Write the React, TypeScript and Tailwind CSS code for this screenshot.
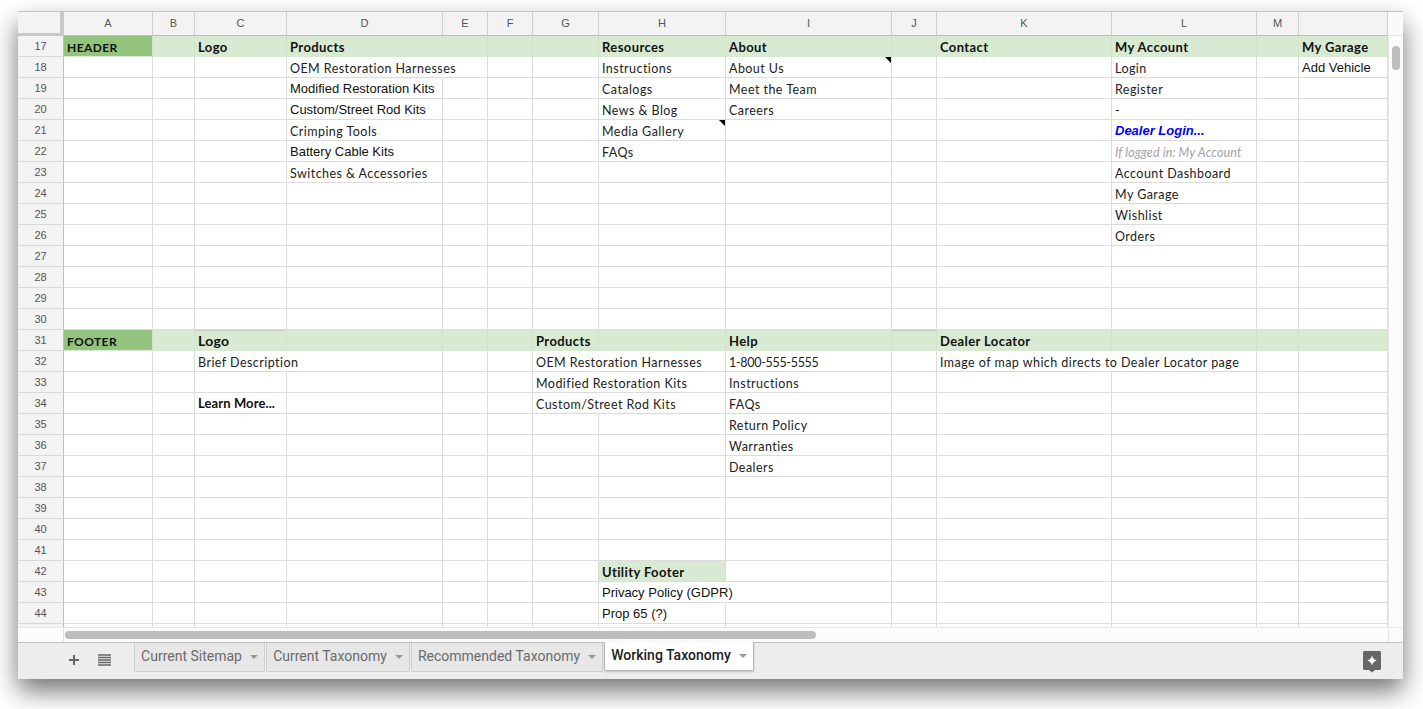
import React from 'react';

type CellStyle = 'karla' | 'phone' | 'bold' | 'caps' | 'learn' | 'arial' | 'dealer' | 'muted' | 'logo';

interface Cell {
  text?: string;
  kind?: CellStyle;
  noRight?: boolean;
  note?: boolean;
  fill?: string;
}

const COLUMNS = [
  { label: 'A', width: 'w-[89px]' },
  { label: 'B', width: 'w-[42px]' },
  { label: 'C', width: 'w-[92px]' },
  { label: 'D', width: 'w-[156px]' },
  { label: 'E', width: 'w-[45px]' },
  { label: 'F', width: 'w-[45px]' },
  { label: 'G', width: 'w-[66px]' },
  { label: 'H', width: 'w-[127px]' },
  { label: 'I', width: 'w-[166px]' },
  { label: 'J', width: 'w-[45px]' },
  { label: 'K', width: 'w-[175px]' },
  { label: 'L', width: 'w-[145px]' },
  { label: 'M', width: 'w-[42px]' },
  { label: '', width: 'w-[89px]' },
];

const KIND_CLASS: Record<CellStyle, string> = {
  karla: "font-['Lato',sans-serif] text-[12.5px] tracking-[0.45px] text-[#222]",
  phone: "font-['Lato',sans-serif] text-[12.5px] tracking-[-0.3px] text-[#222]",
  bold: "font-['Lato',sans-serif] text-[13px] font-bold tracking-[0.4px] text-[#111]",
  caps: "font-['Lato',sans-serif] text-[12px] font-bold tracking-[0.4px] text-[#111]",
  learn: "font-['Lato',sans-serif] text-[13px] font-bold tracking-[0.1px] text-[#111]",
  arial: "font-['Liberation_Sans',sans-serif] text-[13px] text-[#111]",
  dealer: "font-['Liberation_Sans',sans-serif] text-[13px] font-bold italic text-[#0000ff]",
  muted: "font-['Lato',sans-serif] text-[12.5px] italic tracking-[0.1px] text-[#a3a3a3]",
  logo: "font-['Lato',sans-serif] text-[14px] font-bold tracking-[0.3px] text-[#111]",
};

const ROWS: Record<number, Record<string, Cell>> = {
  17: {
    A: { text: 'HEADER', kind: 'caps' },
    C: { text: 'Logo', kind: 'bold' },
    D: { text: 'Products', kind: 'bold' },
    H: { text: 'Resources', kind: 'bold' },
    I: { text: 'About', kind: 'bold' },
    K: { text: 'Contact', kind: 'bold' },
    L: { text: 'My Account', kind: 'bold' },
    N: { text: 'My Garage', kind: 'bold' },
  },
  18: {
    D: { text: 'OEM Restoration Harnesses', noRight: true },
    H: { text: 'Instructions' },
    I: { text: 'About Us', note: true },
    L: { text: 'Login' },
    N: { text: 'Add Vehicle', kind: 'arial' },
  },
  19: {
    D: { text: 'Modified Restoration Kits', kind: 'arial' },
    H: { text: 'Catalogs' },
    I: { text: 'Meet the Team' },
    L: { text: 'Register' },
  },
  20: {
    D: { text: 'Custom/Street Rod Kits', kind: 'arial' },
    H: { text: 'News & Blog' },
    I: { text: 'Careers' },
    L: { text: '-' },
  },
  21: {
    D: { text: 'Crimping Tools' },
    H: { text: 'Media Gallery', note: true },
    L: { text: 'Dealer Login...', kind: 'dealer' },
  },
  22: {
    D: { text: 'Battery Cable Kits', kind: 'arial' },
    H: { text: 'FAQs' },
    L: { text: 'If logged in: My Account', kind: 'muted' },
  },
  23: {
    D: { text: 'Switches & Accessories' },
    L: { text: 'Account Dashboard' },
  },
  24: { L: { text: 'My Garage' } },
  25: { L: { text: 'Wishlist' } },
  26: { L: { text: 'Orders' } },
  31: {
    A: { text: 'FOOTER', kind: 'caps' },
    C: { text: 'Logo', kind: 'logo' },
    G: { text: 'Products', kind: 'bold' },
    I: { text: 'Help', kind: 'bold' },
    K: { text: 'Dealer Locator', kind: 'bold' },
  },
  32: {
    C: { text: 'Brief Description', noRight: true },
    G: { text: 'OEM Restoration Harnesses', noRight: true },
    I: { text: '1-800-555-5555', kind: 'phone' },
    K: { text: 'Image of map which directs to Dealer Locator page', noRight: true },
  },
  33: {
    G: { text: 'Modified Restoration Kits', noRight: true },
    I: { text: 'Instructions' },
  },
  34: {
    C: { text: 'Learn More...', kind: 'learn' },
    G: { text: 'Custom/Street Rod Kits', noRight: true },
    I: { text: 'FAQs' },
  },
  35: { I: { text: 'Return Policy' } },
  36: { I: { text: 'Warranties' } },
  37: { I: { text: 'Dealers' } },
  42: { H: { text: 'Utility Footer', kind: 'bold', fill: 'bg-[#d9ead3]' } },
  43: { H: { text: 'Privacy Policy (GDPR)', kind: 'arial', noRight: true } },
  44: { H: { text: 'Prop 65 (?)', kind: 'arial' } },
};

const ROW_NUMBERS = Array.from({ length: 29 }, (_, i) => 17 + i);
const GREEN_ROWS = [17, 31];

const Caret = () => (
  <span className="ml-[8px] mt-[2px] h-0 w-0 border-x-[4px] border-t-[4px] border-x-transparent border-t-[#999]" />
);

const SheetTab: React.FC<{ name: string; width: string; active?: boolean }> = ({ name, width, active }) => (
  <div
    className={
      active
        ? `${width} relative z-10 -mt-px flex h-[29px] items-center justify-center rounded-b-[2px] border border-t-0 border-[#b4b4b4] bg-white pb-[2px] font-medium text-[#222] shadow-[0_1px_2px_rgba(0,0,0,0.2)]`
        : `${width} flex h-[29px] items-center justify-center rounded-b-[2px] border border-t-0 border-[#cfcfcf] bg-[#e7e7e7] pb-[2px] text-[#6b6b6b]`
    }
  >
    <span className="font-['Roboto',sans-serif] text-[14px] leading-none">{name}</span>
    <Caret />
  </div>
);

const SheetRow: React.FC<{ num: number }> = ({ num }) => {
  const green = GREEN_ROWS.includes(num);
  const cells = ROWS[num] ?? {};
  return (
    <div className="flex h-[21px] shrink-0">
      <div className="flex w-[46px] items-center justify-center border-r border-b border-r-[#bdbdbd] border-b-[#d8d8d8] bg-[#f3f3f3] font-['Liberation_Sans',sans-serif] text-[11px] text-[#555]">
        {num < 45 ? num : ''}
      </div>
      {COLUMNS.map((col, i) => {
        const id = col.label || 'N';
        const cell = cells[id] ?? {};
        let bg = green ? 'bg-[#d9ead3]' : '';
        if (cell.fill) bg = cell.fill;
        if (green && id === 'A') bg = 'bg-[#93c47d]';
        const edge = green
          ? 'border-r-[#d3e3cd] border-b-[#d9ead3]'
          : cell.noRight
            ? 'border-r-transparent border-b-[#dcdcdc]'
            : 'border-r-[#dcdcdc] border-b-[#dcdcdc]';
        let accent = '';
        if (num === 31 && id === 'C') accent = 'border-r-[#b9cdb1] shadow-[inset_0_1px_0_#c3d4bc]';
        if (num === 31 && id === 'J') accent = 'shadow-[inset_0_1px_0_#b9cdb1]';
        let pad = 'pt-[4px]';
        if (cell.kind === 'logo') pad = 'pt-0';
        if (cell.kind === 'arial' || cell.kind === 'dealer' || cell.kind === 'learn') pad = 'pt-[2px]';
        return (
          <div
            key={i}
            className={`${col.width} relative flex shrink-0 items-center whitespace-nowrap border-r border-b pl-[3px] ${pad} ${edge} ${bg} ${accent}`}
          >
            {cell.text && <span className={KIND_CLASS[cell.kind ?? 'karla']}>{cell.text}</span>}
            {cell.note && (
              <span className="absolute top-0 right-0 h-0 w-0 border-t-[6px] border-l-[6px] border-t-black border-l-transparent" />
            )}
          </div>
        );
      })}
    </div>
  );
};

export default function App() {
  return (
    <div className="h-[709px] w-[1423px] overflow-hidden bg-white pt-[11px] pl-[18px]">
      <div className="flex h-[668px] w-[1385px] flex-col border-t border-[#c4c4c4] bg-white shadow-[0_12px_24px_rgba(0,0,0,0.55)]">
        {/* column headers */}
        <div className="flex h-[24px] shrink-0">
          <div className="h-[24px] w-[46px] border-r-[4px] border-b-[3px] border-[#c8c8c8] bg-[#f3f3f3]" />
          {COLUMNS.map((col, i) => (
            <div
              key={i}
              className={`${col.width} flex shrink-0 items-center justify-center border-r border-b border-r-[#cfcfcf] border-b-[#bdbdbd] bg-[#f3f3f3] font-['Liberation_Sans',sans-serif] text-[11px] text-[#555]`}
            >
              {col.label}
            </div>
          ))}
          <div className="flex-1 border-b border-[#e4e4e4] bg-[#fafafa]" />
        </div>

        {/* rows + vertical scrollbar */}
        <div className="flex h-[591px] shrink-0 overflow-hidden">
          <div className="flex w-[1370px] shrink-0 flex-col overflow-hidden">
            {ROW_NUMBERS.map((n) => (
              <SheetRow key={n} num={n} />
            ))}
          </div>
          <div className="flex-1 border-l border-[#e8e8e8] bg-[#fbfbfb] px-[3px] pt-[10px]">
            <div className="h-[24px] w-[8px] rounded-full bg-[#bdbdbd]" />
          </div>
        </div>

        {/* horizontal scrollbar */}
        <div className="flex h-[15px] shrink-0 border-t border-[#e8e8e8] bg-[#fbfbfb]">
          <div className="w-[46px] border-r border-[#e0e0e0]" />
          <div className="ml-px mt-[3px] h-[8px] w-[751px] rounded-full bg-[#bdbdbd]" />
          <div className="flex-1" />
          <div className="w-[15px] border-l border-[#e4e4e4]" />
        </div>

        {/* sheet tabs */}
        <div className="flex h-[37px] shrink-0 items-start border-t border-[#bfbfbf] bg-[#ededed]">
          <div className="flex h-[34px] w-[116px] shrink-0 items-center pl-[50px]">
            <svg width="12" height="12" viewBox="0 0 12 12" className="text-[#666]">
              <path d="M6 1v10M1 6h10" stroke="currentColor" strokeWidth="2" fill="none" />
            </svg>
            <svg width="13" height="12" viewBox="0 0 13 12" className="ml-[18px] text-[#666]">
              <path d="M0 1h13M0 3.5h13M0 6h13M0 8.5h13M0 11h13" stroke="currentColor" strokeWidth="1.3" fill="none" />
            </svg>
          </div>
          <div className="flex gap-px">
            <SheetTab name="Current Sitemap" width="w-[131px]" />
            <SheetTab name="Current Taxonomy" width="w-[144px]" />
            <SheetTab name="Recommended Taxonomy" width="w-[192px]" />
            <SheetTab name="Working Taxonomy" width="w-[150px]" active />
          </div>
          <div className="flex-1" />
          <svg width="18" height="22" viewBox="0 0 18 22" className="mt-[8px] mr-[22px]">
            <path d="M1.500 0h15A1.500 1.500 0 0 1 18 1.500v16a1.500 1.500 0 0 1-1.500 1.500H12l-3 2.500L6 19H1.500A1.500 1.500 0 0 1 0 17.500v-16A1.500 1.500 0 0 1 1.500 0z" fill="#666" />
            <path d="M9 4.200c.6 3 1.800 4.200 4.800 5.300-3 1.100-4.200 2.300-4.800 5.300-.6-3-1.800-4.200-4.800-5.300 3-1.100 4.200-2.300 4.800-5.300z" fill="#fff" />
          </svg>
        </div>
      </div>
    </div>
  );
}
